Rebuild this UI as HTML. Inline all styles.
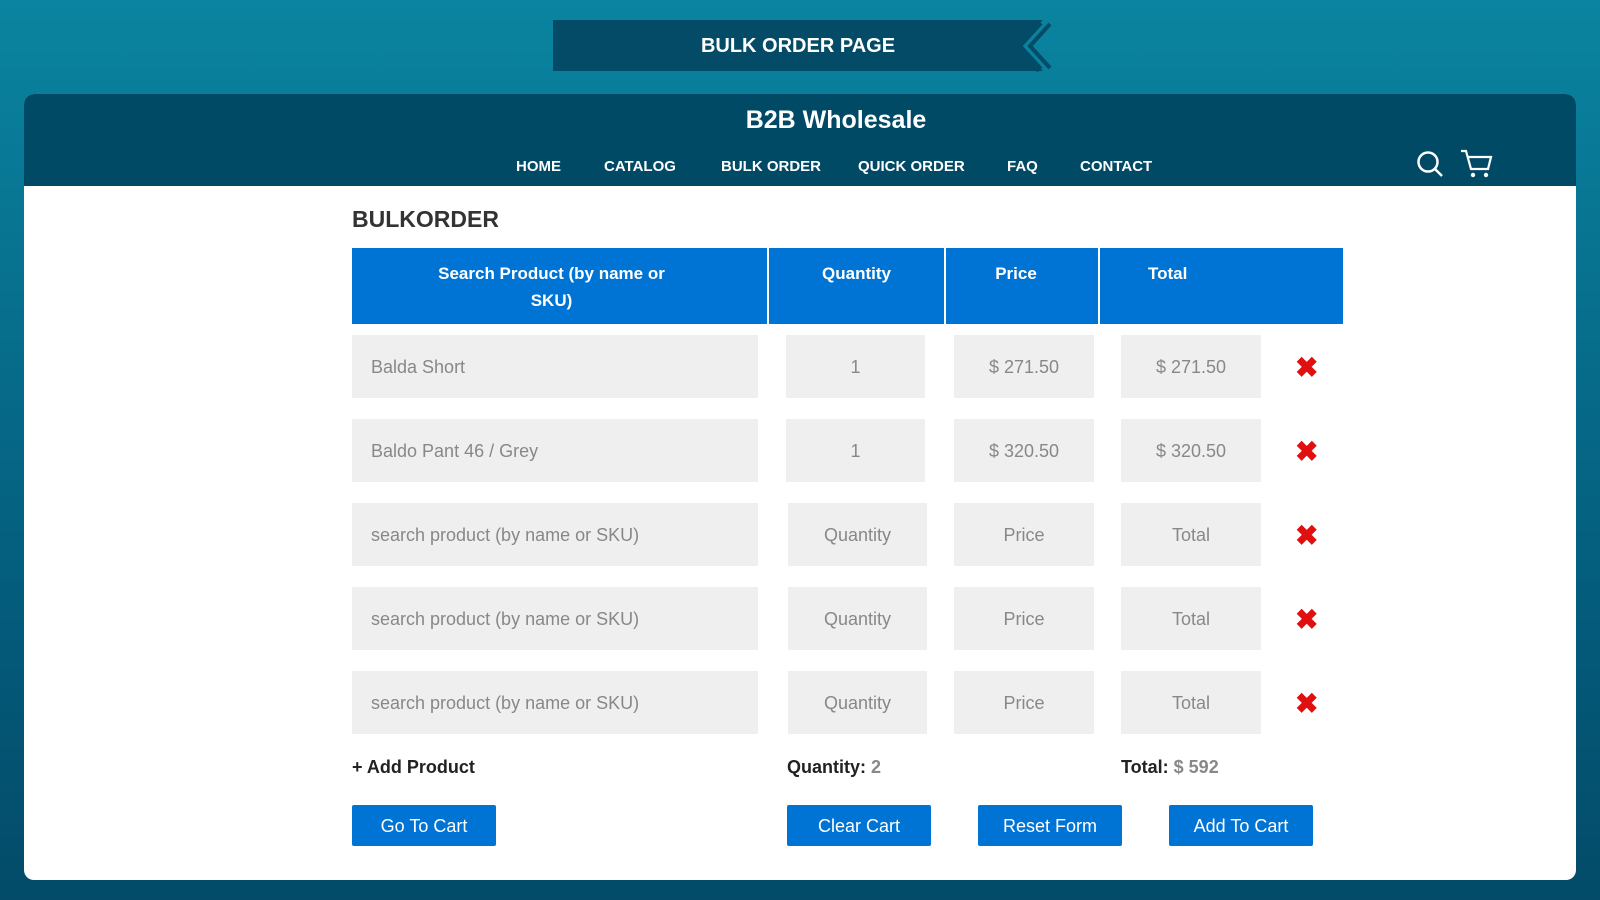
<!DOCTYPE html>
<html><head><meta charset="utf-8"><style>
*{margin:0;padding:0;box-sizing:border-box}
body{width:1600px;height:900px;overflow:hidden;background:linear-gradient(#0a84a0,#045a7a 70%,#034b68);font-family:"Liberation Sans",sans-serif;position:relative}
.a{position:absolute}
.banner{left:553px;top:20px;width:490px;height:51px;background:#034b66;color:#fff;font-size:20px;font-weight:bold;text-align:center;line-height:53px;clip-path:polygon(0 0,100% 0,94% 50%,100% 100%,0 100%)}
.card{left:24px;top:94px;width:1552px;height:786px;background:#fff;border-radius:10px;overflow:hidden}
.hdr{left:0;top:0;width:1552px;height:92px;background:#004a66}
.nav{color:#fff;font-size:15px;font-weight:bold;top:64px}
.th{background:#0074d4;color:#fff;font-weight:bold;font-size:17px;text-align:center;top:248px;height:76px;padding-top:12px;line-height:27px}
.in{background:#efefef;color:#888;font-size:18px;height:63px;line-height:65px}
.x{color:#e01010;font-size:28px;font-weight:bold;line-height:65px}
.btn{background:#0074d4;color:#fff;font-size:18px;text-align:center;line-height:42px;height:41px;top:805px;width:144px;border-radius:2px}
.lab{top:757px;font-size:18px;font-weight:bold;color:#222}
</style></head><body>
<div class="a banner">BULK ORDER PAGE</div>
<svg class="a" style="left:1010px;top:20px" width="42" height="52"><path d="M30 2 L8 26 L30 50" stroke="#034b66" stroke-width="7" fill="none"/><path d="M40 4 L20 26 L40 48" stroke="#034b66" stroke-width="4" fill="none"/></svg>
<div class="a card">
<div class="a hdr"></div>
<div class="a" style="left:0;width:1624px;top:12px;text-align:center;color:#fff;font-size:25px;font-weight:bold">B2B Wholesale</div>
<div class="a nav" style="left:492px">HOME</div>
<div class="a nav" style="left:580px">CATALOG</div>
<div class="a nav" style="left:697px">BULK ORDER</div>
<div class="a nav" style="left:834px">QUICK ORDER</div>
<div class="a nav" style="left:983px">FAQ</div>
<div class="a nav" style="left:1056px">CONTACT</div>
<svg class="a" style="left:1392px;top:56px" width="32" height="30"><circle cx="12" cy="12" r="9.5" stroke="#fff" stroke-width="2.5" fill="none"/><path d="M19 19 L26 26" stroke="#fff" stroke-width="2.5"/></svg>
<svg class="a" style="left:1436px;top:54px" width="34" height="32"><path d="M1 3 H6 L11 21 H28 L31 9 H8" stroke="#fff" stroke-width="2.2" fill="none"/><circle cx="13" cy="27" r="2.2" fill="#fff"/><circle cx="26" cy="27" r="2.2" fill="#fff"/></svg>
</div>
<div class="a" style="left:352px;top:206px;font-size:23px;font-weight:bold;color:#333">BULKORDER</div>
<div class="a th" style="left:352px;width:415px;padding-right:16px">Search Product (by name or<br>SKU)</div>
<div class="a th" style="left:769px;width:175px">Quantity</div>
<div class="a th" style="left:946px;width:152px;padding-right:12px">Price</div>
<div class="a th" style="left:1100px;width:243px;text-align:left;padding-left:48px">Total</div>

<div class="a in" style="left:352px;top:335px;width:406px;padding-left:19px">Balda Short</div>
<div class="a in" style="left:786px;top:335px;width:139px;text-align:center">1</div>
<div class="a in" style="left:954px;top:335px;width:140px;text-align:center">$ 271.50</div>
<div class="a in" style="left:1121px;top:335px;width:140px;text-align:center">$ 271.50</div>
<div class="a x" style="left:1295px;top:335px">✖</div>

<div class="a in" style="left:352px;top:419px;width:406px;padding-left:19px">Baldo Pant 46 / Grey</div>
<div class="a in" style="left:786px;top:419px;width:139px;text-align:center">1</div>
<div class="a in" style="left:954px;top:419px;width:140px;text-align:center">$ 320.50</div>
<div class="a in" style="left:1121px;top:419px;width:140px;text-align:center">$ 320.50</div>
<div class="a x" style="left:1295px;top:419px">✖</div>

<div class="a in" style="left:352px;top:503px;width:406px;padding-left:19px">search product (by name or SKU)</div>
<div class="a in" style="left:788px;top:503px;width:139px;text-align:center">Quantity</div>
<div class="a in" style="left:954px;top:503px;width:140px;text-align:center">Price</div>
<div class="a in" style="left:1121px;top:503px;width:140px;text-align:center">Total</div>
<div class="a x" style="left:1295px;top:503px">✖</div>

<div class="a in" style="left:352px;top:587px;width:406px;padding-left:19px">search product (by name or SKU)</div>
<div class="a in" style="left:788px;top:587px;width:139px;text-align:center">Quantity</div>
<div class="a in" style="left:954px;top:587px;width:140px;text-align:center">Price</div>
<div class="a in" style="left:1121px;top:587px;width:140px;text-align:center">Total</div>
<div class="a x" style="left:1295px;top:587px">✖</div>

<div class="a in" style="left:352px;top:671px;width:406px;padding-left:19px">search product (by name or SKU)</div>
<div class="a in" style="left:788px;top:671px;width:139px;text-align:center">Quantity</div>
<div class="a in" style="left:954px;top:671px;width:140px;text-align:center">Price</div>
<div class="a in" style="left:1121px;top:671px;width:140px;text-align:center">Total</div>
<div class="a x" style="left:1295px;top:671px">✖</div>

<div class="a lab" style="left:352px">+ Add Product</div>
<div class="a lab" style="left:787px">Quantity: <span style="color:#888">2</span></div>
<div class="a lab" style="left:1121px">Total: <span style="color:#888">$ 592</span></div>

<div class="a btn" style="left:352px">Go To Cart</div>
<div class="a btn" style="left:787px">Clear Cart</div>
<div class="a btn" style="left:978px">Reset Form</div>
<div class="a btn" style="left:1169px">Add To Cart</div>
</body></html>
